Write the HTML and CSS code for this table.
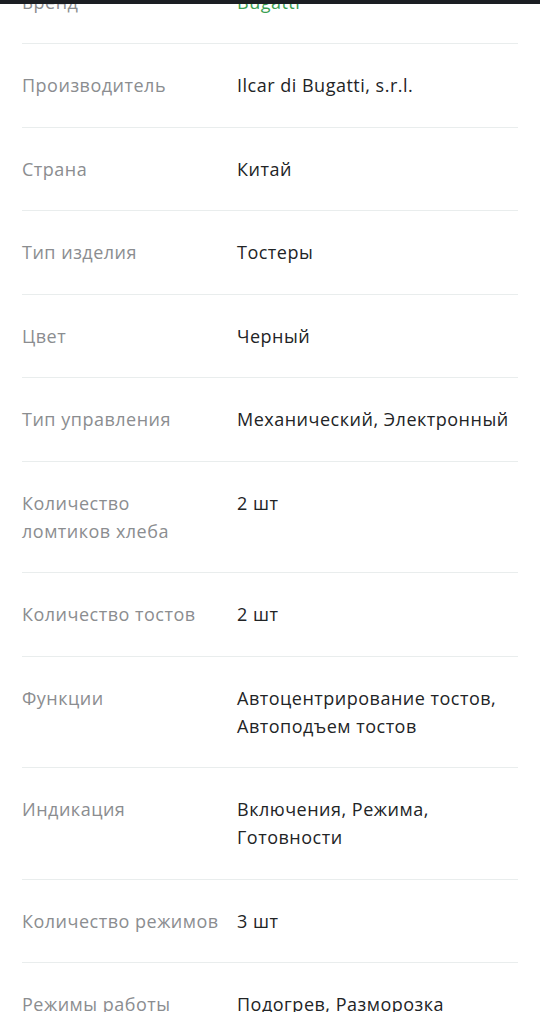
FILE: index.html
```html
<!DOCTYPE html>
<html lang="ru">
<head>
<meta charset="utf-8">
<link rel="stylesheet" href="styles.css">
</head>
<body>
<div class="topbar"></div>
<div class="specs">
  <div class="row"><div class="label">Бренд</div><div class="value link">Bugatti</div></div>
  <div class="row"><div class="label">Производитель</div><div class="value">Ilcar di Bugatti, s.r.l.</div></div>
  <div class="row"><div class="label">Страна</div><div class="value">Китай</div></div>
  <div class="row"><div class="label">Тип изделия</div><div class="value">Тостеры</div></div>
  <div class="row"><div class="label">Цвет</div><div class="value">Черный</div></div>
  <div class="row"><div class="label">Тип управления</div><div class="value">Механический, Электронный</div></div>
  <div class="row"><div class="label">Количество ломтиков хлеба</div><div class="value">2 шт</div></div>
  <div class="row"><div class="label">Количество тостов</div><div class="value">2 шт</div></div>
  <div class="row"><div class="label">Функции</div><div class="value">Автоцентрирование тостов, Автоподъем тостов</div></div>
  <div class="row"><div class="label">Индикация</div><div class="value">Включения, Режима, Готовности</div></div>
  <div class="row"><div class="label">Количество режимов</div><div class="value">3 шт</div></div>
  <div class="row"><div class="label">Режимы работы</div><div class="value">Подогрев, Разморозка</div></div>
</div>
</body>
</html>
```
FILE: styles.css
```css
html, body {
  margin: 0;
  padding: 0;
  background: #ffffff;
  overflow: hidden;
}
body {
  font-family: "Open Sans", "Liberation Sans", sans-serif;
  font-size: 18px;
  letter-spacing: 0.5px;
  line-height: 28px;
}
.topbar {
  position: fixed;
  top: 0;
  left: 0;
  right: 0;
  height: 4px;
  background: #1b1e23;
  z-index: 2;
}
.specs {
  margin: -39.5px 22px 0 22px;
}
.row {
  display: grid;
  grid-template-columns: 200px 1fr;
  column-gap: 15px;
  padding: 27.25px 0;
  border-bottom: 1px solid #e9eded;
}
.label {
  color: #8b8d90;
}
.value {
  color: #222426;
}
.value.link {
  color: #3a9f52;
}
```
